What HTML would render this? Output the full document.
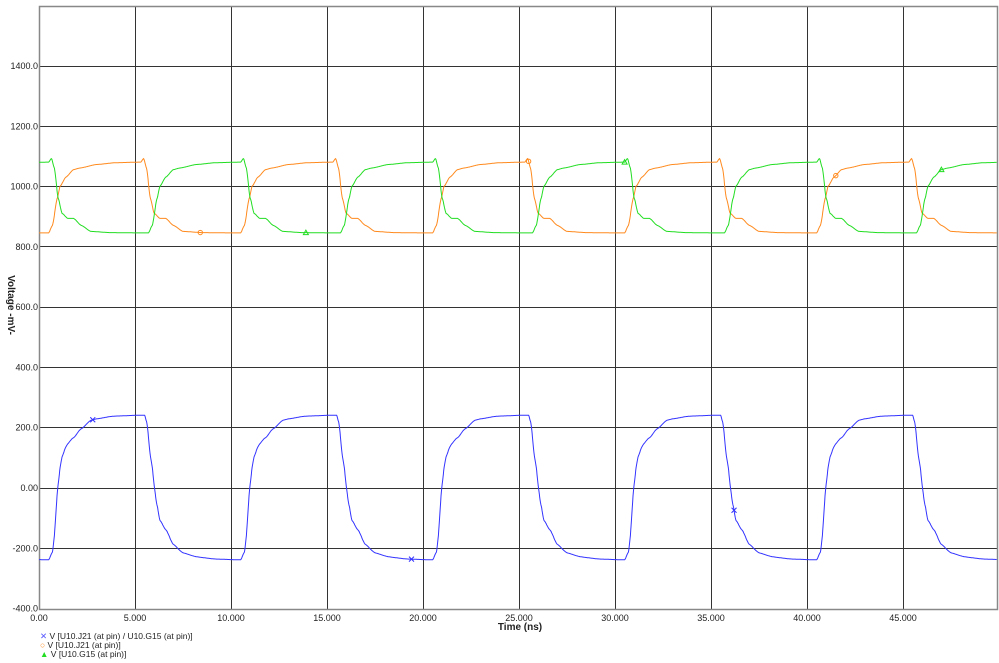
<!DOCTYPE html>
<html><head><meta charset="utf-8"><style>
html,body{margin:0;padding:0;background:#fff;width:999px;height:663px;overflow:hidden}
svg{display:block}
text{font-family:"Liberation Sans",Arial,sans-serif;font-size:9px;fill:#222}
</style></head><body>
<svg id="s" width="999" height="663" xmlns="http://www.w3.org/2000/svg">
<g id="grid" stroke="#333" stroke-width="1" fill="none"></g>
<rect x="39.5" y="6.5" width="958" height="603" fill="none" stroke="#888" stroke-width="1.5"/>
<g id="lab"></g>
<path id="pb" fill="none" stroke="#3333ff" stroke-width="1"/>
<path id="po" fill="none" stroke="#ff8a1e" stroke-width="1"/>
<path id="pg" fill="none" stroke="#22dd22" stroke-width="1"/>
<g id="mk" fill="none" stroke-width="1"></g>
<text x="520" y="630" text-anchor="middle" style="font-weight:bold;font-size:10px">Time  (ns)</text>
<text transform="translate(8,305) rotate(90)" text-anchor="middle" style="font-weight:bold;font-size:10px">Voltage  -mV-</text>
<text x="40" y="639" style="font-size:8.5px"><tspan fill="#5555ff">✕</tspan> V [U10.J21 (at pin) / U10.G15 (at pin)]</text>
<text x="40" y="648" style="font-size:8.5px"><tspan fill="#ff8a1e">○</tspan> V [U10.J21 (at pin)]</text>
<text x="40" y="657" style="font-size:8.5px"><tspan fill="#22dd22">▲</tspan> V [U10.G15 (at pin)]</text>
</svg>
<script>
var X=t=>39+t*19.2, Y=v=>487.5-v*0.3013;
var g=document.getElementById('grid'),lab=document.getElementById('lab'),h='',l='';
for(var i=1;i<10;i++){var x=Math.round(X(i*5))+0.5;h+='<line x1="'+x+'" y1="6" x2="'+x+'" y2="610"/>';}
for(var v=-200;v<=1400;v+=200){var y=Math.round(Y(v))+0.5;h+='<line x1="39" y1="'+y+'" x2="998" y2="'+y+'"/>';}
g.innerHTML=h;
for(var v=-400;v<=1400;v+=200){var s=v==0?'0.00':(v.toFixed(1));l+='<text x="38" y="'+(Y(v)+3.5)+'" text-anchor="end">'+s+'</text>';}
for(var i=0;i<10;i++){l+='<text x="'+X(i*5)+'" y="621" text-anchor="middle">'+(i*5).toFixed(i?3:2)+'</text>';}
lab.innerHTML=l;
var P=[[0,845],[0.5,845],[0.7,870],[0.95,960],[1.1,1000],[1.4,1030],[1.8,1055],[2.1,1060],[3,1072],[4,1078],[5.3,1080],[5.45,1092],[5.6,1060],[5.8,960],[6,910],[6.3,893],[6.6,893],[7,870],[7.5,850],[8.5,846],[10,845]];
function o(t){t=((t%10)+10)%10;for(var k=1;k<P.length;k++){if(t<=P[k][0]){var a=P[k-1],b=P[k],u=(t-a[0])/(b[0]-a[0]);u=u*u*(3-2*u)*0.5+u*0.5;return a[1]+(b[1]-a[1])*u;}}return 845;}
function gr(t){return o(t+4.8);}
function c(v){return Math.min(v,1080);}
function bl(t){return (c(o(t))-c(gr(t)))*240/235;}
function path(f){var d='';for(var t=0;t<=49.9;t+=0.02){d+=(d?'L':'M')+X(t).toFixed(1)+' '+Y(f(t)).toFixed(1);}return d;}
document.getElementById('pb').setAttribute('d',path(bl));
document.getElementById('po').setAttribute('d',path(o));
document.getElementById('pg').setAttribute('d',path(gr));
var m='';
[2.8,19.4,36.2].forEach(t=>{var x=X(t),y=Y(bl(t));m+='<path stroke="#3333ff" d="M'+(x-2.5)+' '+(y-2.5)+'L'+(x+2.5)+' '+(y+2.5)+'M'+(x-2.5)+' '+(y+2.5)+'L'+(x+2.5)+' '+(y-2.5)+'"/>';});
[8.4,25.5,41.5].forEach(t=>{m+='<circle stroke="#ff8a1e" cx="'+X(t)+'" cy="'+Y(o(t))+'" r="2.2"/>';});
[13.9,30.5,47].forEach(t=>{var x=X(t),y=Y(gr(t));m+='<path stroke="#22dd22" d="M'+x+' '+(y-2.5)+'L'+(x+2.5)+' '+(y+2)+'L'+(x-2.5)+' '+(y+2)+'Z"/>';});
document.getElementById('mk').innerHTML=m;
</script>
</body></html>
